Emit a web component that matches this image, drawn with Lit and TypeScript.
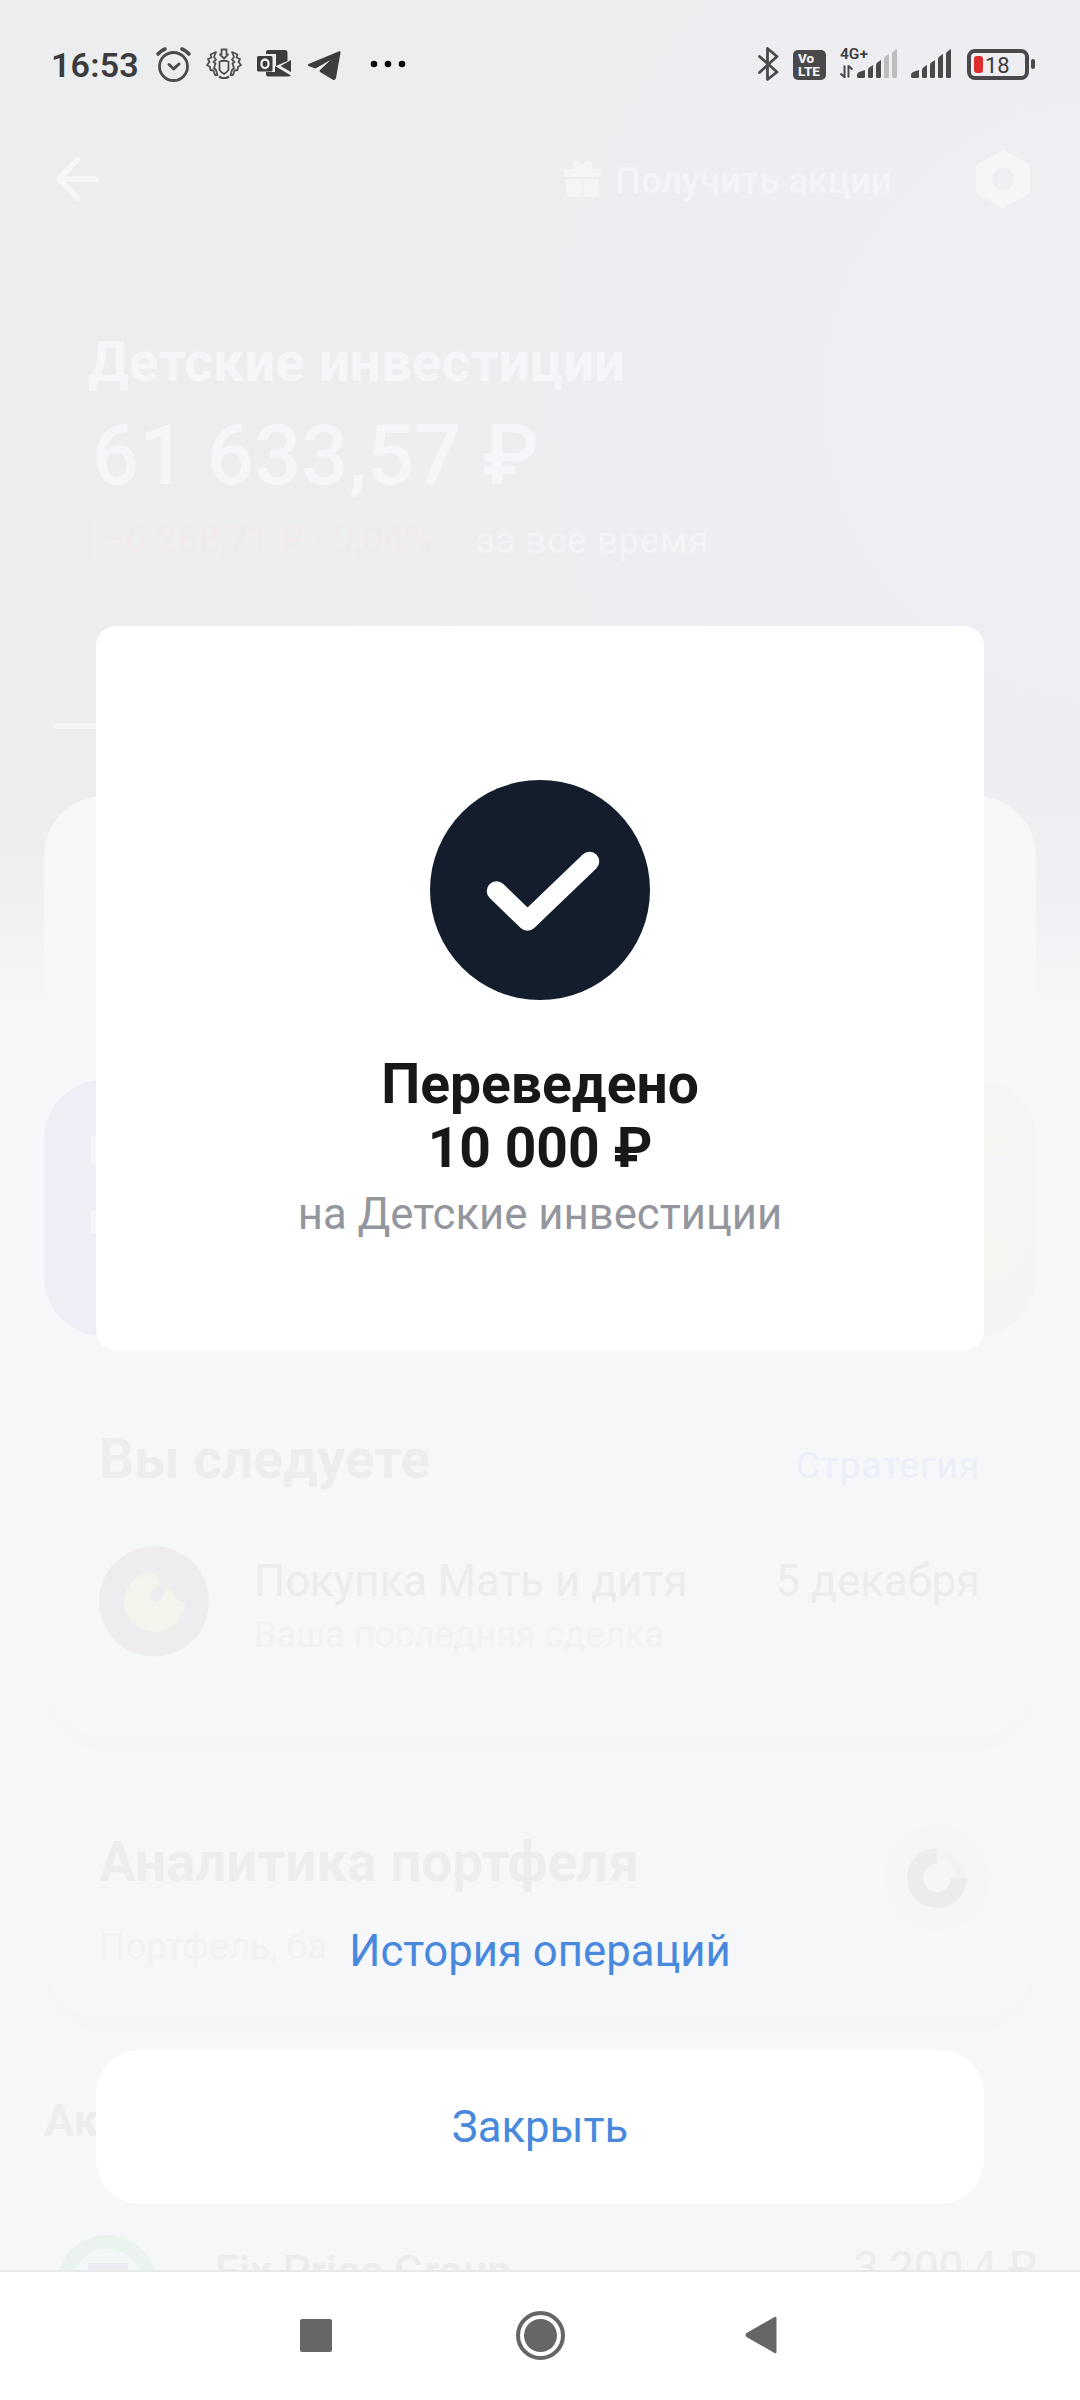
import { LitElement, html, css, svg } from "lit";
import { customElement } from "lit/decorators.js";

const BARS = [
  { x: 0, y: 21, w: 8 },
  { x: 11, y: 16, w: 5 },
  { x: 19, y: 11, w: 5 },
  { x: 27, y: 5, w: 5 },
  { x: 35, y: 0, w: 5 },
];

const signal = (active: number) => html`
  <svg class="signal" width="40" height="30" viewBox="0 0 40 30">
    ${BARS.map(
      (b, i) => svg`<path d="M${b.x} ${b.y + 5} Q${b.x} ${b.y + 3} ${b.x + 2} ${b.y + 2} L${b.x + b.w} ${b.y} V27.5 Q${b.x + b.w} 29 ${b.x + b.w - 1.5} 29 H${b.x + 1.5} Q${b.x} 29 ${b.x} 27.5 Z" fill=${i < active ? "#4a4a4d" : "#bcbcbf"} />`
    )}
  </svg>`;

@customElement("status-bar")
export class StatusBar extends LitElement {
  static styles = css`
    :host { display: flex; align-items: flex-start; height: 130px; padding: 0 45px 0 51px; box-sizing: border-box; font-family: Roboto, "Liberation Sans", sans-serif; color: #3b3c3d; }
    svg { display: block; flex: none; }
    .time { font-size: 34px; font-weight: 600; line-height: 40px; width: 88px; margin: 45px 16px 0 0; letter-spacing: 0.2px; white-space: nowrap; }
    .alarm { margin: 46px 14px 0 0; }
    .emblem { margin: 48px 15px 0 0; }
    .outlook { margin: 50px 16px 0 0; }
    .plane { margin: 50px 29px 0 0; }
    .dots { margin-top: 60px; }
    .bt { margin: 47px 14px 0 auto; }
    .volte { box-sizing: border-box; width: 33px; height: 30px; margin: 50px 14px 0 0; border-radius: 5px; background: #4a4a4c; color: #f3f3f5; font-size: 13.500px; line-height: 13px; font-weight: 800; padding: 2px 0 0 5px; }
    .volte span { display: block; }
    .cell { display: grid; grid-template-columns: 17px 40px; grid-template-rows: 12px 18px; margin: 48px 14px 0 0; }
    .cell .net { grid-area: 1 / 1 / 2 / 3; font-size: 15.500px; font-weight: 600; line-height: 12px; z-index: 1; white-space: nowrap; }
    .cell .arrows { grid-area: 2 / 1; margin-top: 5px; }
    .cell .signal { grid-area: 1 / 2 / 3 / 3; margin-top: 1px; }
    .second { margin: 49px 16px 0 0; }
    .battery { display: flex; align-items: center; box-sizing: border-box; width: 62px; height: 31px; margin-top: 49px; border: 4px solid #4a4a4c; border-radius: 8px; padding-left: 3px; font-size: 22px; line-height: 23px; }
    .battery i { width: 9px; height: 17px; margin-right: 2px; border-radius: 3px; background: #dd2c2c; }
    .battery span { margin-top: 1px; }
    .nub { width: 4px; height: 10px; margin: 59px 0 0 2px; border-radius: 2px; background: #4a4a4c; }
  `;
  render() {
    return html`
      <div class="time">16:53</div>
      <svg class="alarm" width="37" height="37" viewBox="0 0 37 37" fill="none" stroke="#4b4c4d" stroke-linecap="round">
        <circle cx="18.5" cy="20.5" r="14" stroke-width="2.8" />
        <path d="M14 18.5 L18.7 23 L24 18" stroke-width="3" stroke-linejoin="round" />
        <path d="M3 8 Q6 4.5 10 3 M27 3 Q31 4.500 34 8" stroke-width="3.600" />
      </svg>
      <svg class="emblem" width="36" height="32" viewBox="0 0 36 32" fill="none" stroke="#505152" stroke-width="1.800" stroke-linejoin="round">
        <path d="M15.500 1.500 H20.500 V6.500 H22 L18 10.500 L14 6.500 H15.500 Z" />
        <path d="M13.500 13.500 Q18 12 22.500 13.500 V22 Q21 24 18 26 Q15 24 13.500 22 Z" />
        <path d="M10 4 L4.500 6.500 L5.500 9.500 L2 11 L3.500 14 L1 17 L4 19 L4.500 22 L7.500 22.500 L9 27 L11.500 27 L10 22 L8 20 L9.500 15.500 L7.500 14 L10 11.500 L8 9 Z" />
        <path d="M26 4 L31.500 6.500 L30.500 9.500 L34 11 L32.500 14 L35 17 L32 19 L31.500 22 L28.500 22.500 L27 27 L24.500 27 L26 22 L28 20 L26.500 15.500 L28.500 14 L26 11.500 L28 9 Z" />
        <path d="M13 28.500 Q14.500 29.500 16 30 H20 Q21.500 29.500 23 28.500" stroke-width="2.200" />
      </svg>
      <svg class="outlook" width="34" height="27" viewBox="0 0 34 27">
        <path d="M11 0 H28 Q30.500 0 30.500 3 V11 L19 16 V4 H9 V2 Q9 0 11 0 Z" fill="#3c3d3e" />
        <path d="M34 10 V22 L23.500 16 Z" fill="#3c3d3e" />
        <path d="M18 16 L34 25.500 Q33 26.500 31 26.500 H11 Q9 26.500 9 24 V22 H18 Z" fill="#3c3d3e" />
        <rect x="0" y="6" width="15.500" height="15.500" rx="1.500" fill="#3c3d3e" />
        <ellipse cx="8" cy="13.800" rx="3.600" ry="4.300" fill="none" stroke="#f0f1f2" stroke-width="2.300" />
      </svg>
      <svg class="plane" width="34" height="31" viewBox="0 0 34 31">
        <path d="M1.500 14 L31.500 1.500 Q34 0.500 33.500 3 L29 28 Q28 31 25.500 29.500 L13 22 Q12 21 13 20 L23.500 10 L8.500 18.500 L1.500 16 Q0 15 1.500 14 Z" fill="#3c3d3e" />
      </svg>
      <svg class="dots" width="36" height="8" viewBox="0 0 36 8" fill="#0b0b0b">
        <circle cx="4" cy="4" r="3.300" /><circle cx="18" cy="4" r="3.300" /><circle cx="32" cy="4" r="3.300" />
      </svg>
      <svg class="bt" width="21" height="34" viewBox="0 0 21 34" fill="none" stroke="#4a4a4c" stroke-width="2.800" stroke-linecap="round" stroke-linejoin="round">
        <path d="M1.500 9.500 L19 25 L9.500 32.500 V1.500 L19 9.500 L1.500 25.500" />
      </svg>
      <div class="volte"><span>Vo</span><span>LTE</span></div>
      <div class="cell">
        <span class="net">4G+</span>
        <svg class="arrows" width="13" height="13" viewBox="0 0 13 13" fill="none" stroke="#4a4a4c" stroke-width="2">
          <path d="M4.500 0.500 V12 L0.500 8.500 M8.500 12.500 V1 L12.500 4.500" />
        </svg>
        ${signal(3)}
      </div>
      <div class="second">${signal(5)}</div>
      <div class="battery"><i></i><span>18</span></div>
      <div class="nub"></div>
    `;
  }
}

@customElement("portfolio-page")
export class PortfolioPage extends LitElement {
  static styles = css`
    :host {
      display: flex; flex-direction: column; box-sizing: border-box; height: 2270px; overflow: hidden; padding-top: 130px;
      font-family: Roboto, "Liberation Sans", sans-serif; color: #edeef0; white-space: nowrap;
      background:
        linear-gradient(to bottom, rgba(245, 247, 249, 0) 800px, rgba(245, 247, 249, 0.25) 890px, #f5f7f9 1010px),
        radial-gradient(circle at 1130px 400px, #f1f0f6 0, #efeef3 130px, #eeedf2 480px, #edeef0 720px, rgba(237, 238, 240, 0) 900px),
        #ecedef;
    }
    svg { display: block; flex: none; }
    .head { display: flex; flex: none; align-items: center; height: 98px; padding: 0 50px 0 55px; }
    .gift { margin-left: auto; margin-right: 14px; }
    .promo { width: 277px; margin: 2px 84px 0 0; font-size: 36.500px; font-weight: 500; color: #f4f5f8; }
    .name { margin: 102px 0 0 88px; font-size: 55px; line-height: 64px; font-weight: 700; color: #f5f6f9; }
    .sum { margin: 14px 0 0 92px; font-size: 83px; line-height: 96px; font-weight: 500; color: #f5f6f9; }
    .result { display: flex; flex: none; align-items: center; margin: 8px 0 0 92px; height: 56px; font-size: 37px; }
    .loss { box-sizing: border-box; width: 360px; padding-left: 12px; margin-right: 24px; border-radius: 16px; line-height: 56px; letter-spacing: 0.4px; background: #eeeeef; color: #f1eaec; }
    .period { letter-spacing: 0.500px; color: #f3f4f7; }
    .line { width: 300px; height: 6px; margin: 155px 53px 0; border-radius: 3px; background: #f4f5f7; flex: none; }
    .panel { height: 250px; margin: 67px 44px 0; border-radius: 60px; background: linear-gradient(#f6f7f9, #f5f7f9); flex: none; }
    .banner { display: flex; flex-direction: column; box-sizing: border-box; height: 256px; margin: 34px 44px 0; padding: 56px 47px; border-radius: 60px; color: #f8f8fb; background: radial-gradient(ellipse 80px 60px at 95% 68%, #f6f5f0 0, rgba(246, 245, 240, 0) 100%), radial-gradient(ellipse 70px 20px at 95% 24%, #f6f5f0 0, rgba(246, 245, 240, 0) 100%), radial-gradient(ellipse 300px 300px at 100% 30%, #f4f5f6 0, #f3f4f6 60%, rgba(243, 244, 246, 0) 100%), #eeeef6; flex: none; }
    .banner i { width: 60px; height: 32px; margin-bottom: 47px; background: #f6f6fa; }
    .banner i + i { height: 26px; }
    .card { display: flex; flex-direction: column; box-sizing: border-box; flex: none; margin: 0 44px; padding: 0 56px 0 55px; border-radius: 60px; background: #f6f7f9; box-shadow: 0 16px 30px rgba(60, 70, 90, 0.009); }
    .follow { height: 352px; margin-top: 48px; padding-top: 43px; }
    .between { display: flex; justify-content: space-between; align-items: baseline; }
    h2 { margin: 0; font-size: 55px; line-height: 64px; font-weight: 700; color: #ecedef; }
    .link { font-size: 37.500px; letter-spacing: 0.700px; color: #ebf0f8; }
    .deal { display: flex; margin-top: 55px; }
    .lines { flex: 1; margin: 5px 0 0 45px; }
    .main { font-size: 43.700px; line-height: 60px; color: #ebecee; }
    .sub { font-size: 36px; line-height: 44px; color: #f1f2f4; }
    .lines .sub { margin-top: 2px; }
    .stats { height: 234px; margin-top: 48px; padding-top: 46px; flex-direction: row; justify-content: space-between; padding-right: 44px; }
    .stats h2 { font-size: 54.800px; }
    .stats .sub { margin-top: 31px; font-size: 37px; }
    .stats svg { margin-top: -7px; }
    .shares { margin: 76px 0 0 44px; font-size: 45px; line-height: 54px; font-weight: 700; color: #ecedef; }
    .asset { display: flex; flex: none; margin: 87px 43px 0 57px; }
    .asset b { margin: 11px auto 0 58px; font-size: 43.500px; line-height: 54px; font-weight: 500; color: #ebecee; }
    .asset span { margin-top: 5px; font-size: 44px; line-height: 56px; color: #ebecee; }
  `;
  render() {
    return html`
      <div class="head">
        <svg width="44" height="46" viewBox="0 0 44 46" fill="none" stroke="#f6f7f9" stroke-width="5.500" stroke-linecap="round" stroke-linejoin="round">
          <path d="M22.500 4 L4 23 L22.500 42 M5 23 H41" />
        </svg>
        <svg class="gift" width="37" height="38" viewBox="0 0 37 38" fill="#f3f5f6">
          <path d="M0 9 H9 Q7 2 13 1 Q17 1 18.500 5 Q20 1 24 1 Q30 2 28 9 H37 V17 H0 Z M2 19 H35 V33 Q35 37 31 37 H6 Q2 37 2 33 Z" />
          <path d="M18.500 19 V37" stroke="#f0f1f4" stroke-width="3" />
        </svg>
        <div class="promo">Получить акции</div>
        <svg width="54" height="60" viewBox="0 0 54 60">
          <path fill-rule="evenodd" d="M27 1 Q29 1 31 3 L51 14 Q54 15.500 54 19 V41 Q54 44 51 46 L31 57 Q27 61 23 57 L3 46 Q0 44 0 41 V19 Q0 15.500 3 14 L23 3 Q25 1 27 1 Z M27 19 A11 11 0 1 0 27 41 A11 11 0 1 0 27 19 Z" fill="#f4f6f8" />
        </svg>
      </div>
      <div class="name">Детские инвестиции</div>
      <div class="sum">61 633,57 ₽</div>
      <div class="result"><div class="loss">−6 268,71 ₽ · 9,04%</div><div class="period">за все время</div></div>
      <div class="line"></div>
      <div class="panel"></div>
      <div class="banner"><i></i><i></i></div>
      <div class="card follow">
        <div class="between"><h2>Вы следуете</h2><span class="link">Стратегия</span></div>
        <div class="deal">
          <svg width="110" height="111" viewBox="0 0 110 111">
            <circle cx="55" cy="55.500" r="55" fill="#efecef" />
            <path d="M52 26 Q62 29 60 40 Q50 42 52 52 Q58 60 63 52 L67 42 Q75 44 76 53 L86 56 Q84 80 58 87 Q24 82 25 55 Q28 30 52 26 Z" fill="#f4f3ec" />
          </svg>
          <div class="lines">
            <div class="between main"><span>Покупка Мать и дитя</span><span>5 декабря</span></div>
            <div class="sub">Ваша последняя сделка</div>
          </div>
        </div>
      </div>
      <div class="card stats">
        <div><h2>Аналитика портфеля</h2><div class="sub">Портфель, ба</div></div>
        <svg width="110" height="110" viewBox="0 0 110 110" fill="none">
          <circle cx="55" cy="55" r="53" fill="#f5f6f8" />
          <path d="M55 33 A22 22 0 1 0 77 55" stroke="#ebecee" stroke-width="16" />
          <path d="M56 31 A24 24 0 0 1 79 54" stroke="#f2f3f5" stroke-width="10" />
        </svg>
      </div>
      <div class="shares">Акции</div>
      <div class="asset">
        <svg width="100" height="100" viewBox="0 0 100 100">
          <circle cx="50" cy="50" r="43" fill="#f3f7f7" stroke="#ebf3ef" stroke-width="14" />
          <rect x="31" y="28" width="40" height="40" fill="#ebedf3" />
        </svg>
        <b>Fix Price Group</b><span>3 200,4 ₽</span>
      </div>
    `;
  }
}

@customElement("app-root")
export class AppRoot extends LitElement {
  static styles = css`
    :host { display: grid; grid-template: 2400px / 1080px; overflow: hidden; background: #fff; font-family: Roboto, "Liberation Sans", sans-serif; }
    portfolio-page, .front { grid-area: 1 / 1; min-width: 0; }
    .front { display: flex; flex-direction: column; align-items: center; z-index: 1; }
    status-bar { width: 100%; }
    .dialog { display: flex; flex-direction: column; align-items: center; box-sizing: border-box; width: 888px; height: 724px; margin-top: 496px; padding-top: 154px; border-radius: 20px; background: #fff; }
    .dialog svg { display: block; }
    .done { margin-top: 52px; font-size: 55.200px; line-height: 64px; font-weight: 700; text-align: center; color: #18181a; }
    .target { margin-top: 6px; font-size: 43.700px; line-height: 56px; color: #94969e; }
    .history, .close { border: 0; font: 400 43.700px/60px Roboto, "Liberation Sans", sans-serif; color: #4889dd; }
    .history { margin-top: 571px; padding: 0 20px; background: none; }
    .close { width: 888px; height: 154px; margin-top: 69px; border-radius: 44px; background: #fff; padding: 0; }
    .nav { display: flex; align-items: center; justify-content: center; box-sizing: border-box; width: 100%; height: 130px; margin-top: auto; border-top: 2px solid #e7e8e9; background: #fff; padding: 0 4px 2px 0; }
    .nav svg { display: block; }
    .home { margin: 0 180px 0 184px; }
  `;
  render() {
    return html`
      <portfolio-page></portfolio-page>
      <div class="front">
        <status-bar></status-bar>
        <div class="dialog">
          <svg width="220" height="220" viewBox="0 0 220 220">
            <circle cx="110" cy="110" r="110" fill="#141d2b" />
            <path d="M66.500 111 L97.500 141 L159.500 81.500" fill="none" stroke="#fff" stroke-width="19.500" stroke-linecap="round" stroke-linejoin="round" />
          </svg>
          <div class="done">Переведено<br />10 000 ₽</div>
          <div class="target">на Детские инвестиции</div>
        </div>
        <button class="history">История операций</button>
        <button class="close">Закрыть</button>
        <div class="nav">
          <svg width="32" height="33" viewBox="0 0 32 33"><rect width="32" height="33" rx="2" fill="#666" /></svg>
          <svg class="home" width="49" height="49" viewBox="0 0 49 49">
            <circle cx="24.500" cy="24.500" r="22.500" fill="none" stroke="#666" stroke-width="4" />
            <circle cx="24.500" cy="24.500" r="16.500" fill="#666" />
          </svg>
          <svg width="32" height="38" viewBox="0 0 32 38"><path d="M29.500 1 Q31.500 0 31.500 2 V36 Q31.500 38 29.500 37 L1.500 21 Q-0.500 19 1.500 17 Z" fill="#666" /></svg>
        </div>
      </div>
    `;
  }
}
